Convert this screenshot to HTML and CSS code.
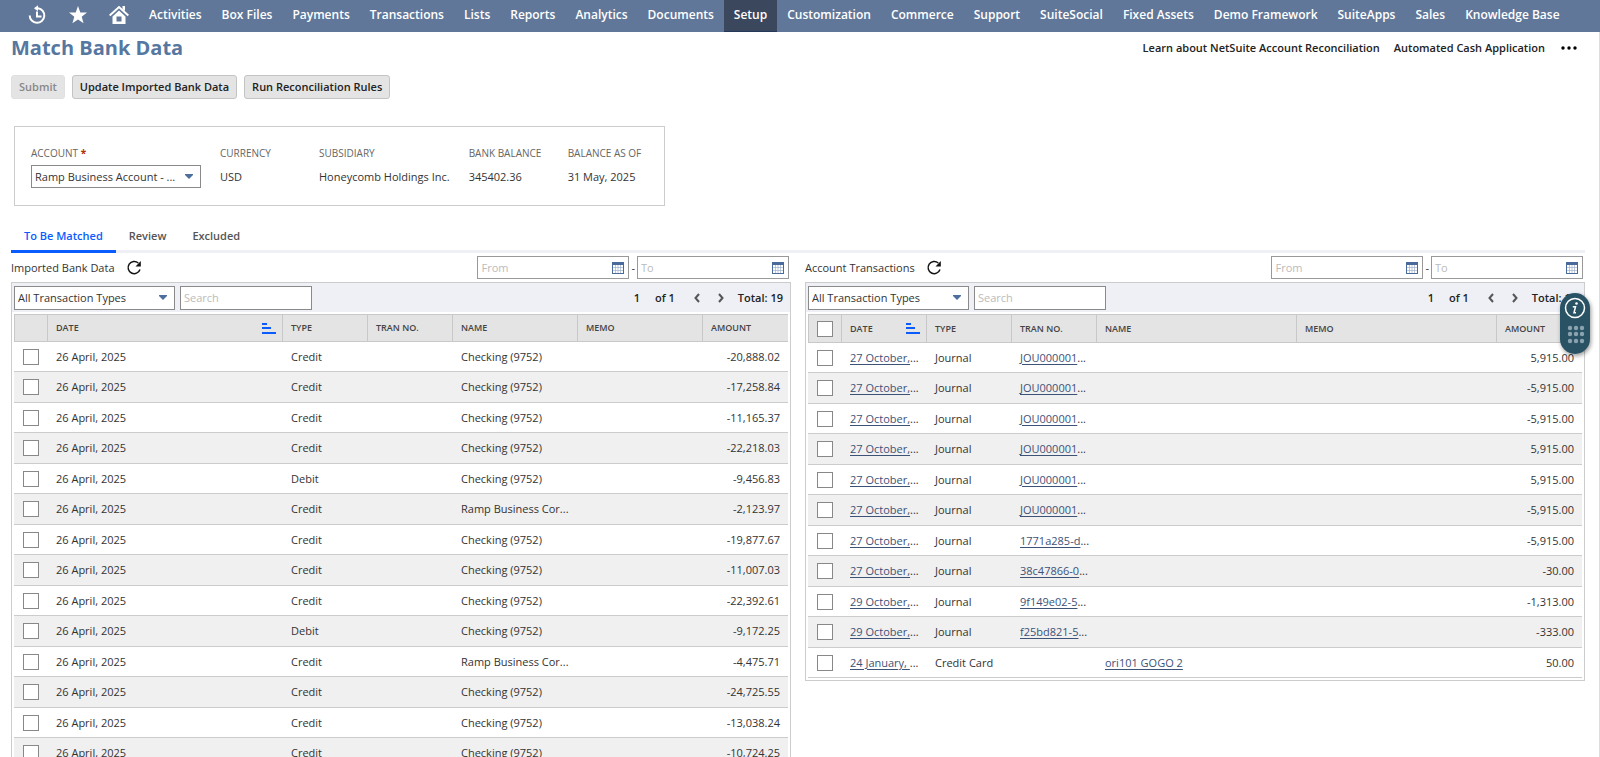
FILE: index.html
```html
<!DOCTYPE HTML>
<html lang="en">
<head>
<meta charset="utf-8">
<title>Match Bank Data</title>
<link rel="stylesheet" href="styles.css">
</head>
<body>
<!--top menu-->
<nav class="nav">
	<a class="ico" href="#" aria-label="Recent records"><svg width="20" height="20" viewBox="0 0 20 20" fill="none" stroke="#fff" stroke-width="2"><path d="M8.500 3.200H11A7.300 7.300 0 1 1 2.700 10.500"/><path d="M10 6.500v5h4.500"/><path d="M7 3.200l4-3v6z" fill="#fff" stroke="none"/></svg></a>
	<a class="ico" href="#" aria-label="Shortcuts"><svg width="20" height="20" viewBox="0 0 20 20"><path d="M10 1l2.300 6.400 6.700.1-5.300 4.200 1.900 6.600L10 14.400l-5.600 3.900 1.900-6.600L1 7.500l6.700-.1z" fill="#fff"/></svg></a>
	<a class="ico" href="#" aria-label="Home"><svg width="20" height="20" viewBox="0 0 20 20"><path d="M.7 10.500L10 2l9.300 8.500" fill="none" stroke="#fff" stroke-width="2"/><path d="M13.500 1H16v5l-2.500-2z" fill="#fff"/><path fill-rule="evenodd" d="M10 5.500l6.500 6V19h-13v-7.500zM7.500 11.500v5h5v-5z" fill="#fff"/></svg></a>
	<a href="#">Activities</a>
	<a href="#">Box Files</a>
	<a href="#">Payments</a>
	<a href="#">Transactions</a>
	<a href="#">Lists</a>
	<a href="#">Reports</a>
	<a href="#">Analytics</a>
	<a href="#">Documents</a>
	<a class="on" href="#">Setup</a>
	<a href="#">Customization</a>
	<a href="#">Commerce</a>
	<a href="#">Support</a>
	<a href="#">SuiteSocial</a>
	<a href="#">Fixed Assets</a>
	<a href="#">Demo Framework</a>
	<a href="#">SuiteApps</a>
	<a href="#">Sales</a>
	<a href="#">Knowledge Base</a>
</nav>
<main class="page">
	<!--title-->
	<header class="head">
		<h1>Match Bank Data</h1>
		<div class="head-links">
			<a href="#">Learn about NetSuite Account Reconciliation</a>
			<a href="#">Automated Cash Application</a>
			<button class="more" type="button" aria-label="More"><svg width="16" height="4" viewBox="0 0 16 4"><circle cx="2" cy="2" r="1.700"/><circle cx="8" cy="2" r="1.700"/><circle cx="14" cy="2" r="1.700"/></svg></button>
		</div>
	</header>
	<div class="actions">
		<button class="btn" type="button" disabled>Submit</button>
		<button class="btn" type="button">Update Imported Bank Data</button>
		<button class="btn" type="button">Run Reconciliation Rules</button>
	</div>
	<!--account-->
	<section class="account">
		<div class="field">
			<label for="account">ACCOUNT <b>*</b></label>
			<div class="select account-select">
				<select id="account"><option>Ramp Business Account - ...</option></select>
				<svg width="8" height="5" viewBox="0 0 8 5"><path d="M0 0h8v1L4 5 0 1z"/></svg>
			</div>
		</div>
		<div class="field"><span class="name">CURRENCY</span><span class="val">USD</span></div>
		<div class="field"><span class="name">SUBSIDIARY</span><span class="val">Honeycomb Holdings Inc.</span></div>
		<div class="field"><span class="name">BANK BALANCE</span><span class="val">345402.36</span></div>
		<div class="field"><span class="name">BALANCE AS OF</span><span class="val">31 May, 2025</span></div>
	</section>
	<!--tabs-->
	<div class="tabs">
		<button class="on" type="button">To Be Matched</button>
		<button type="button">Review</button>
		<button type="button">Excluded</button>
	</div>
	<div class="cols">
		<!--imported data-->
		<section>
			<div class="bar">
				<h2>Imported Bank Data</h2>
				<button class="plain" type="button" aria-label="Refresh"><svg width="16" height="16" viewBox="0 0 16 16"><path d="M12.300 3A6.100 6.100 0 1 0 14 9.500" fill="none" stroke="#111" stroke-width="1.500"/><path d="M14.800 1v5.500H9.500z" fill="#111"/></svg></button>
				<div class="dates">
					<div class="date"><input type="text" placeholder="From" aria-label="Imported from"><button class="plain" type="button" aria-label="Pick date"><svg width="12" height="12" viewBox="0 0 12 12"><path d="M0 0h12v12H0z" fill="#4a6a9c"/><path d="M1 3h10v8H1z" fill="#fff"/><path d="M3.500 3v8M6 3v8M8.500 3v8M1 5.500h10M1 8.500h10" stroke="#9fb1cd" stroke-width=".7"/></svg></button></div>
					<span>-</span>
					<div class="date"><input type="text" placeholder="To" aria-label="Imported to"><button class="plain" type="button" aria-label="Pick date"><svg width="12" height="12" viewBox="0 0 12 12"><path d="M0 0h12v12H0z" fill="#4a6a9c"/><path d="M1 3h10v8H1z" fill="#fff"/><path d="M3.500 3v8M6 3v8M8.500 3v8M1 5.500h10M1 8.500h10" stroke="#9fb1cd" stroke-width=".7"/></svg></button></div>
				</div>
			</div>
			<div class="panel">
				<div class="tools">
					<div class="select">
						<select aria-label="Imported types"><option>All Transaction Types</option></select>
						<svg width="8" height="5" viewBox="0 0 8 5"><path d="M0 0h8v1L4 5 0 1z"/></svg>
					</div>
					<input class="search" type="text" placeholder="Search" aria-label="Search imported data">
					<div class="pager">
						<span>1</span><span>of 1</span>
						<button class="plain" type="button" aria-label="Previous"><svg width="6" height="10" viewBox="0 0 6 10"><path d="M5 1L1.500 5 5 9"/></svg></button>
						<button class="plain" type="button" aria-label="Next"><svg width="6" height="10" viewBox="0 0 6 10"><path d="M1 1l3.500 4L1 9"/></svg></button>
						<strong>Total: 19</strong>
					</div>
				</div>
				<table class="grid">
					<colgroup><col class="w-check"><col><col class="w-s"><col class="w-s"><col class="w-m"><col class="w-m"><col class="w-s"></colgroup>
					<thead>
						<tr><th></th><th class="sorted"><div class="sort">DATE<svg width="14" height="11" viewBox="0 0 14 11"><path d="M0 0h5v2H0zM0 4h9v2H0zM0 9h14v2H0z"/></svg></div></th><th>TYPE</th><th>TRAN NO.</th><th>NAME</th><th>MEMO</th><th>AMOUNT</th></tr>
					</thead>
					<tbody>
						<tr><td><input type="checkbox" aria-label="Select row"></td><td>26 April, 2025</td><td>Credit</td><td></td><td>Checking (9752)</td><td></td><td>-20,888.02</td></tr>
						<tr><td><input type="checkbox" aria-label="Select row"></td><td>26 April, 2025</td><td>Credit</td><td></td><td>Checking (9752)</td><td></td><td>-17,258.84</td></tr>
						<tr><td><input type="checkbox" aria-label="Select row"></td><td>26 April, 2025</td><td>Credit</td><td></td><td>Checking (9752)</td><td></td><td>-11,165.37</td></tr>
						<tr><td><input type="checkbox" aria-label="Select row"></td><td>26 April, 2025</td><td>Credit</td><td></td><td>Checking (9752)</td><td></td><td>-22,218.03</td></tr>
						<tr><td><input type="checkbox" aria-label="Select row"></td><td>26 April, 2025</td><td>Debit</td><td></td><td>Checking (9752)</td><td></td><td>-9,456.83</td></tr>
						<tr><td><input type="checkbox" aria-label="Select row"></td><td>26 April, 2025</td><td>Credit</td><td></td><td>Ramp Business Cor...</td><td></td><td>-2,123.97</td></tr>
						<tr><td><input type="checkbox" aria-label="Select row"></td><td>26 April, 2025</td><td>Credit</td><td></td><td>Checking (9752)</td><td></td><td>-19,877.67</td></tr>
						<tr><td><input type="checkbox" aria-label="Select row"></td><td>26 April, 2025</td><td>Credit</td><td></td><td>Checking (9752)</td><td></td><td>-11,007.03</td></tr>
						<tr><td><input type="checkbox" aria-label="Select row"></td><td>26 April, 2025</td><td>Credit</td><td></td><td>Checking (9752)</td><td></td><td>-22,392.61</td></tr>
						<tr><td><input type="checkbox" aria-label="Select row"></td><td>26 April, 2025</td><td>Debit</td><td></td><td>Checking (9752)</td><td></td><td>-9,172.25</td></tr>
						<tr><td><input type="checkbox" aria-label="Select row"></td><td>26 April, 2025</td><td>Credit</td><td></td><td>Ramp Business Cor...</td><td></td><td>-4,475.71</td></tr>
						<tr><td><input type="checkbox" aria-label="Select row"></td><td>26 April, 2025</td><td>Credit</td><td></td><td>Checking (9752)</td><td></td><td>-24,725.55</td></tr>
						<tr><td><input type="checkbox" aria-label="Select row"></td><td>26 April, 2025</td><td>Credit</td><td></td><td>Checking (9752)</td><td></td><td>-13,038.24</td></tr>
						<tr><td><input type="checkbox" aria-label="Select row"></td><td>26 April, 2025</td><td>Credit</td><td></td><td>Checking (9752)</td><td></td><td>-10,724.25</td></tr>
					</tbody>
				</table>
			</div>
		</section>
		<!--account transactions-->
		<section>
			<div class="bar">
				<h2>Account Transactions</h2>
				<button class="plain" type="button" aria-label="Refresh"><svg width="16" height="16" viewBox="0 0 16 16"><path d="M12.300 3A6.100 6.100 0 1 0 14 9.500" fill="none" stroke="#111" stroke-width="1.500"/><path d="M14.800 1v5.500H9.500z" fill="#111"/></svg></button>
				<div class="dates">
					<div class="date"><input type="text" placeholder="From" aria-label="Transactions from"><button class="plain" type="button" aria-label="Pick date"><svg width="12" height="12" viewBox="0 0 12 12"><path d="M0 0h12v12H0z" fill="#4a6a9c"/><path d="M1 3h10v8H1z" fill="#fff"/><path d="M3.500 3v8M6 3v8M8.500 3v8M1 5.500h10M1 8.500h10" stroke="#9fb1cd" stroke-width=".7"/></svg></button></div>
					<span>-</span>
					<div class="date"><input type="text" placeholder="To" aria-label="Transactions to"><button class="plain" type="button" aria-label="Pick date"><svg width="12" height="12" viewBox="0 0 12 12"><path d="M0 0h12v12H0z" fill="#4a6a9c"/><path d="M1 3h10v8H1z" fill="#fff"/><path d="M3.500 3v8M6 3v8M8.500 3v8M1 5.500h10M1 8.500h10" stroke="#9fb1cd" stroke-width=".7"/></svg></button></div>
				</div>
			</div>
			<div class="panel">
				<div class="tools">
					<div class="select">
						<select aria-label="Transaction types"><option>All Transaction Types</option></select>
						<svg width="8" height="5" viewBox="0 0 8 5"><path d="M0 0h8v1L4 5 0 1z"/></svg>
					</div>
					<input class="search" type="text" placeholder="Search" aria-label="Search transactions">
					<div class="pager">
						<span>1</span><span>of 1</span>
						<button class="plain" type="button" aria-label="Previous"><svg width="6" height="10" viewBox="0 0 6 10"><path d="M5 1L1.500 5 5 9"/></svg></button>
						<button class="plain" type="button" aria-label="Next"><svg width="6" height="10" viewBox="0 0 6 10"><path d="M1 1l3.500 4L1 9"/></svg></button>
						<strong>Total: 11</strong>
					</div>
				</div>
				<table class="grid trans">
					<colgroup><col class="w-check"><col class="w-s"><col class="w-s"><col class="w-s"><col><col><col class="w-s"></colgroup>
					<thead>
						<tr><th><input type="checkbox" aria-label="Select all"></th><th class="sorted"><div class="sort">DATE<svg width="14" height="11" viewBox="0 0 14 11"><path d="M0 0h5v2H0zM0 4h9v2H0zM0 9h14v2H0z"/></svg></div></th><th>TYPE</th><th>TRAN NO.</th><th>NAME</th><th>MEMO</th><th>AMOUNT</th></tr>
					</thead>
					<tbody>
						<tr><td><input type="checkbox" aria-label="Select row"></td><td><a href="#">27 October,</a>...</td><td>Journal</td><td><a href="#">JOU000001</a>...</td><td></td><td></td><td>5,915.00</td></tr>
						<tr><td><input type="checkbox" aria-label="Select row"></td><td><a href="#">27 October,</a>...</td><td>Journal</td><td><a href="#">JOU000001</a>...</td><td></td><td></td><td>-5,915.00</td></tr>
						<tr><td><input type="checkbox" aria-label="Select row"></td><td><a href="#">27 October,</a>...</td><td>Journal</td><td><a href="#">JOU000001</a>...</td><td></td><td></td><td>-5,915.00</td></tr>
						<tr><td><input type="checkbox" aria-label="Select row"></td><td><a href="#">27 October,</a>...</td><td>Journal</td><td><a href="#">JOU000001</a>...</td><td></td><td></td><td>5,915.00</td></tr>
						<tr><td><input type="checkbox" aria-label="Select row"></td><td><a href="#">27 October,</a>...</td><td>Journal</td><td><a href="#">JOU000001</a>...</td><td></td><td></td><td>5,915.00</td></tr>
						<tr><td><input type="checkbox" aria-label="Select row"></td><td><a href="#">27 October,</a>...</td><td>Journal</td><td><a href="#">JOU000001</a>...</td><td></td><td></td><td>-5,915.00</td></tr>
						<tr><td><input type="checkbox" aria-label="Select row"></td><td><a href="#">27 October,</a>...</td><td>Journal</td><td><a href="#">1771a285-d</a>...</td><td></td><td></td><td>-5,915.00</td></tr>
						<tr><td><input type="checkbox" aria-label="Select row"></td><td><a href="#">27 October,</a>...</td><td>Journal</td><td><a href="#">38c47866-0</a>...</td><td></td><td></td><td>-30.00</td></tr>
						<tr><td><input type="checkbox" aria-label="Select row"></td><td><a href="#">29 October,</a>...</td><td>Journal</td><td><a href="#">9f149e02-5</a>...</td><td></td><td></td><td>-1,313.00</td></tr>
						<tr><td><input type="checkbox" aria-label="Select row"></td><td><a href="#">29 October,</a>...</td><td>Journal</td><td><a href="#">f25bd821-5</a>...</td><td></td><td></td><td>-333.00</td></tr>
						<tr><td><input type="checkbox" aria-label="Select row"></td><td><a href="#">24 January, </a>...</td><td>Credit Card</td><td></td><td><a href="#">ori101 GOGO 2</a></td><td></td><td>50.00</td></tr>
					</tbody>
				</table>
			</div>
		</section>
	</div>
</main>
<!--help widget-->
<button class="help" type="button" aria-label="Help">
	<svg width="30" height="61" viewBox="0 0 30 61"><circle cx="15" cy="15" r="9.500" fill="none" stroke="#fff" stroke-width="1.500"/><circle cx="16.500" cy="10.500" r="1.300" fill="#fff"/><path d="M12.800 13.800h2.700l-1.500 6h2" fill="none" stroke="#fff" stroke-width="1.500"/><g fill="#8ba3b0"><circle cx="10" cy="35" r="2.200"/><circle cx="16" cy="35" r="2.200"/><circle cx="22" cy="35" r="2.200"/><circle cx="10" cy="41" r="2.200"/><circle cx="16" cy="41" r="2.200"/><circle cx="22" cy="41" r="2.200"/><circle cx="10" cy="48" r="2.200"/><circle cx="16" cy="48" r="2.200"/><circle cx="22" cy="48" r="2.200"/></g></svg>
</button>
</body>
</html>
```
FILE: styles.css
```css
*{box-sizing:border-box;}
body,h1,h2{margin:0;padding:0;}
body{font:11px/16px "Open Sans",sans-serif;color:#333;background:#fff;}
button,input,select{font:inherit;color:inherit;margin:0;border-radius:0;}
svg{display:block;}
.plain{display:flex;padding:0;border:0;background:none;cursor:pointer;}
/*top menu*/
.nav{display:flex;height:32px;padding-left:16px;background:#607799;font-size:12px;}
.nav a{display:flex;align-items:center;padding:0 10px 2px;color:#fff;font-weight:600;text-decoration:none;white-space:nowrap;}
.nav .ico{width:41px;justify-content:center;padding:0 0 2px;}
.nav .on{background:#3a475d;border-bottom:1px solid #24385b;}
/*page*/
.page{padding:0 14px 0 11px;border-right:1px solid #ddd;}
.head{display:flex;justify-content:space-between;align-items:center;height:32px;}
.head h1{font-size:20px;line-height:28px;color:#56779f;}
.head-links{display:flex;align-items:center;gap:14px;padding-right:8px;}
.head-links a{color:#222;font-weight:600;text-decoration:none;}
.more{display:flex;padding:0 0 0 2px;border:0;background:none;}
.actions{display:flex;gap:7px;padding-top:11px;}
.btn{height:24px;padding:0 7px;border:1px solid #c4c4c4;border-radius:3px;background:#e4e4e4;color:#222;font-weight:600;}
.btn:disabled{border-color:#e0e0e0;color:#888;}
/*account*/
.account{display:flex;gap:19px;width:fit-content;margin:27px 3px 0;padding:18px 16px 17px;border:1px solid #ccc;}
.field{display:flex;flex-direction:column;gap:3px;min-width:80px;}
.field label,.field .name{font-size:10px;line-height:17px;color:#666;}
.field b{color:#b33000;}
.field .val{line-height:23px;}
.account-select{width:170px;}
/*select with own arrow*/
.select{display:grid;height:24px;background:#fff;border:1px solid #8a8a8a;}
.select select,.select svg{grid-area:1/1;}
.select select{width:100%;padding:0 18px 0 3px;border:0;background:none;appearance:none;}
.select svg{align-self:center;justify-self:end;margin-right:7px;fill:#4d6f9e;pointer-events:none;}
.account .select{height:23px;}
/*tabs*/
.tabs{display:flex;margin-top:16px;border-bottom:3px solid #eef0f5;}
.tabs button{height:31px;padding:0 13px;margin-bottom:-3px;border:0;border-bottom:3px solid transparent;background:none;font-weight:600;color:#555;}
.tabs .on{border-color:#0a5cff;color:#0a5cff;}
/*content*/
.cols{display:grid;grid-template-columns:1fr 1fr;gap:14px;align-items:start;}
.bar{display:flex;align-items:center;gap:11px;height:29px;padding-right:2px;}
.bar h2{font-size:11px;font-weight:400;}
.dates{display:flex;align-items:center;gap:2px;margin-left:auto;}
.date{display:flex;align-items:center;width:152px;height:23px;padding-right:4px;border:1px solid #999;}
.date input{flex:1;min-width:0;padding:0 3px;border:0;background:none;}
::placeholder{color:#bbb;}
.panel{border:1px solid #ccc;}
.tools{display:flex;align-items:center;gap:5px;height:29px;padding:0 7px 0 2px;background:#eef0f5;}
.tools .select{width:161px;}
.search{width:132px;height:24px;padding:0 3px;border:1px solid #8a8a8a;}
.pager{display:flex;align-items:center;gap:10px;margin-left:auto;color:#222;font-weight:600;}
.pager strong{font-weight:600;}
.pager span{padding-right:5px;}
.pager .plain{padding:0 4px;}
.pager svg{fill:none;stroke:#555;stroke-width:2;}
/*tables*/
.grid{width:calc(100% - 4px);margin:2px 2px 0;table-layout:fixed;border-collapse:separate;border-spacing:0;}
.w-check{width:34px;}
.w-s{width:85px;}
.w-m{width:125px;}
.grid th,.grid td{padding:0 8px;text-align:left;white-space:nowrap;overflow:hidden;}
.grid th{height:28px;border:1px solid #c8c8c8;border-width:1px 1px 1px 0;background:#e4e4e4;font-size:9px;font-weight:600;color:#444;}
.grid th:first-child{border-left-width:1px;}
.grid th:last-child{border-right:0;}
.grid .sorted{padding-right:6px;}
.grid.trans th{height:29px;}
.grid td{height:30px;border-bottom:1px solid #ccc;}
.grid td:first-child{padding-left:9px;}
.grid tr:nth-child(even) td{height:31px;background:#f0f0f0;}
.grid td:last-child{text-align:right;}
.grid a{color:#3d5277;text-decoration:underline;text-underline-offset:2px;}
.sort{display:flex;align-items:center;justify-content:space-between;}
.sort svg{fill:#0a5cff;}
.trans{margin-bottom:2px;}
input[type=checkbox]{display:block;width:16px;height:16px;appearance:none;border:1px solid #888;background:#fff;}
/*help widget*/
.help{position:fixed;top:293px;right:10px;padding:0;border:0;border-radius:15px;background:#2a5265;box-shadow:1px 2px 4px rgba(0,0,0,.4);}
```
